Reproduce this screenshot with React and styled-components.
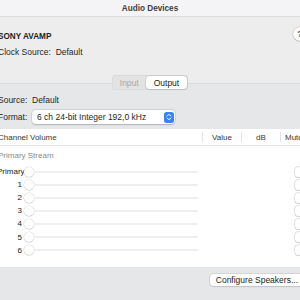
import React from "react";
import styled, { createGlobalStyle } from "styled-components";

const GlobalStyle = createGlobalStyle`
  html, body {
    margin: 0;
    padding: 0;
    width: 300px;
    height: 300px;
    overflow: hidden;
    background: #e5e7e8;
  }
  body {
    font-family: "Liberation Sans", Arial, sans-serif;
    -webkit-font-smoothing: antialiased;
  }
`;

const CHANNELS = ["Primary", "1", "2", "3", "4", "5", "6"];

const Window = styled.div`
  width: 306px;
  height: 300px;
  margin-left: -3px;
  display: flex;
  flex-direction: column;
  background: #ededee;
  color: #262626;
  font-size: 8.5px;
`;

const TitleBar = styled.div`
  height: 16px;
  flex: none;
  display: flex;
  align-items: center;
  justify-content: center;
  background: #f4f4f6;
  border-bottom: 1px solid #dcdcdc;
  font-weight: bold;
  font-size: 8.2px;
  color: #3d3d3d;
`;

const Header = styled.div`
  display: flex;
  justify-content: space-between;
  padding: 14px 0 0 1px;
  height: 44px;
  flex: none;
`;

const DeviceInfo = styled.div`
  display: flex;
  flex-direction: column;
  gap: 5px;
`;

const DeviceName = styled.div`
  font-weight: bold;
  font-size: 8.2px;
  line-height: 11px;
  color: #1e1e1e;
`;

const InfoLine = styled.div`
  line-height: 11px;
  white-space: pre;
`;

const HelpButton = styled.div`
  width: 14px;
  height: 14px;
  margin: -4px -4px 0 0;
  border-radius: 50%;
  background: #fff;
  box-shadow: 0 0 0 0.5px rgba(0, 0, 0, 0.18), 0 0.5px 1px rgba(0, 0, 0, 0.2);
  display: flex;
  align-items: center;
  justify-content: center;
  font-weight: bold;
  font-size: 9px;
  color: #444;
`;

const TabRow = styled.div`
  display: flex;
  justify-content: center;
  height: 15px;
  margin-bottom: -7px;
  position: relative;
  z-index: 1;
  flex: none;
`;

const Segmented = styled.div`
  display: flex;
  background: #e3e3e4;
  border-radius: 4px;
  padding: 1px;
  box-shadow: inset 0 0 0 0.5px rgba(0, 0, 0, 0.06);
`;

const Segment = styled.div`
  display: flex;
  align-items: center;
  justify-content: center;
  padding: 0 ${(p) => (p.$active ? "8px" : "7px")};
  border-radius: 3.5px;
  font-size: 8.5px;
  color: ${(p) => (p.$active ? "#222" : "#a9a9a9")};
  background: ${(p) => (p.$active ? "#fff" : "transparent")};
  box-shadow: ${(p) =>
    p.$active ? "0 0 0 0.5px rgba(0,0,0,0.12), 0 0.5px 1.5px rgba(0,0,0,0.15)" : "none"};
`;

const Panel = styled.div`
  flex: 1;
  display: flex;
  flex-direction: column;
  background: #e5e7e8;
  border-top: 1px solid #dadbdc;
  padding-top: 9px;
`;

const FieldRow = styled.div`
  display: flex;
  align-items: center;
  height: 14px;
  padding-left: 1px;
  margin-bottom: 3px;
`;

const FieldLabel = styled.div`
  width: 34px;
  flex: none;
`;

const PopUp = styled.div`
  width: 143px;
  height: 14px;
  display: flex;
  align-items: center;
  justify-content: space-between;
  padding: 0 1px 0 5px;
  box-sizing: border-box;
  background: #fff;
  border-radius: 4px;
  box-shadow: 0 0 0 0.5px rgba(0, 0, 0, 0.12), 0 0.5px 1.5px rgba(0, 0, 0, 0.18);
`;

const Stepper = styled.div`
  width: 10px;
  height: 11px;
  border-radius: 2.5px;
  background: #3a84f6;
  display: flex;
  align-items: center;
  justify-content: center;
`;

const Table = styled.div`
  margin-top: 2px;
  background: #fff;
  height: 138px;
  flex: none;
  display: flex;
  flex-direction: column;
`;

const HeaderRow = styled.div`
  display: grid;
  grid-template-columns: 206px 39px 39px 1fr;
  height: 16px;
  align-items: center;
  border-bottom: 1px solid #e6e6e6;
  font-size: 8px;
  color: #3a3a3a;
`;

const HeaderCell = styled.div`
  display: flex;
  align-items: center;
  height: 10px;
  justify-content: ${(p) => (p.$center ? "center" : "flex-start")};
  padding-left: ${(p) => (p.$center ? "0" : p.$indent || "1px")};
  white-space: nowrap;
  border-right: ${(p) => (p.$sep ? "1px solid #e2e2e2" : "none")};
`;

const SectionLabel = styled.div`
  height: 19px;
  display: flex;
  align-items: center;
  padding-left: 1px;
  color: #8a8a8a;
  font-size: 8px;
`;

const ChannelRow = styled.div`
  height: 13.1px;
  display: flex;
  align-items: center;
  gap: 2px;
`;

const ChannelName = styled.div`
  width: 25px;
  text-align: right;
  flex: none;
  font-size: 8px;
  color: #222;
`;

const Slider = styled.div`
  width: 174px;
  display: flex;
  align-items: center;
  flex: none;
`;

const Knob = styled.div`
  width: 10px;
  height: 10px;
  border-radius: 50%;
  background: #fff;
  flex: none;
  box-shadow: 0 0 0 0.5px rgba(0, 0, 0, 0.14), 0 0.5px 1px rgba(0, 0, 0, 0.12);
`;

const Track = styled.div`
  flex: 1;
  height: 2px;
  border-radius: 1px;
  background: #efefef;
`;

const CheckBox = styled.div`
  margin-left: auto;
  margin-right: -2px;
  width: 10px;
  height: 10px;
  border-radius: 3px;
  background: #fff;
  box-shadow: 0 0 0 0.5px rgba(0, 0, 0, 0.2), 0 0.5px 1px rgba(0, 0, 0, 0.1);
`;

const Footer = styled.div`
  flex: 1;
  display: flex;
  justify-content: flex-end;
  align-items: flex-start;
  padding-top: 7px;
`;

const PushButton = styled.div`
  height: 12px;
  display: flex;
  align-items: center;
  padding: 0 5px 0 6px;
  margin-right: 0;
  background: #fff;
  border-radius: 3.5px;
  font-size: 8.5px;
  color: #222;
  box-shadow: 0 0 0 0.5px rgba(0, 0, 0, 0.12), 0 0.5px 1.5px rgba(0, 0, 0, 0.18);
`;

const StepperIcon = () => (
  <svg width="6" height="8" viewBox="0 0 6 8" fill="none">
    <path d="M1.2 3 L3 1.2 L4.8 3" stroke="#fff" strokeWidth="1" strokeLinecap="round" strokeLinejoin="round" />
    <path d="M1.2 5 L3 6.8 L4.8 5" stroke="#fff" strokeWidth="1" strokeLinecap="round" strokeLinejoin="round" />
  </svg>
);

export default function App() {
  return (
    <>
      <GlobalStyle />
      <Window>
        <TitleBar>Audio Devices</TitleBar>
        <Header>
          <DeviceInfo>
            <DeviceName>SONY AVAMP</DeviceName>
            <InfoLine>Clock Source:  Default</InfoLine>
          </DeviceInfo>
          <HelpButton>?</HelpButton>
        </Header>
        <TabRow>
          <Segmented>
            <Segment>Input</Segment>
            <Segment $active>Output</Segment>
          </Segmented>
        </TabRow>
        <Panel>
          <FieldRow>
            <FieldLabel>Source:</FieldLabel>
            <span>Default</span>
          </FieldRow>
          <FieldRow>
            <FieldLabel>Format:</FieldLabel>
            <PopUp>
              <span>6 ch 24-bit Integer 192,0 kHz</span>
              <Stepper>
                <StepperIcon />
              </Stepper>
            </PopUp>
          </FieldRow>
          <Table>
            <HeaderRow>
              <HeaderCell $sep>Channel Volume</HeaderCell>
              <HeaderCell $sep $center>Value</HeaderCell>
              <HeaderCell $sep $center>dB</HeaderCell>
              <HeaderCell $indent="4px">Mute</HeaderCell>
            </HeaderRow>
            <SectionLabel>Primary Stream</SectionLabel>
            {CHANNELS.map((name) => (
              <ChannelRow key={name}>
                <ChannelName>{name}</ChannelName>
                <Slider>
                  <Knob />
                  <Track />
                </Slider>
                <CheckBox />
              </ChannelRow>
            ))}
          </Table>
          <Footer>
            <PushButton>Configure Speakers...</PushButton>
          </Footer>
        </Panel>
      </Window>
    </>
  );
}
